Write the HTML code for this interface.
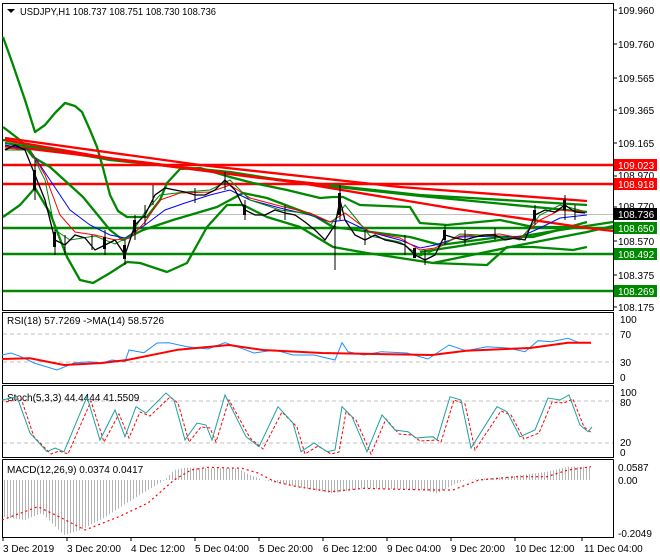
<!DOCTYPE html>
<html><head><meta charset="utf-8"><style>
html,body{margin:0;padding:0;background:#fff;}
svg{display:block;font-family:"Liberation Sans",sans-serif;font-size:10px;}
</style></head><body>
<svg width="660" height="560" viewBox="0 0 660 560" xmlns="http://www.w3.org/2000/svg">
<defs>
<pattern id="hist" width="3" height="10" patternUnits="userSpaceOnUse"><rect x="1" y="0" width="1" height="10" fill="#b4b4b4"/></pattern>
</defs>
<rect width="660" height="560" fill="#fff"/>
<g stroke="#000" stroke-width="1" fill="none">
<rect x="2.5" y="3.5" width="611" height="307"/>
<rect x="2.5" y="312.5" width="611" height="71"/>
<rect x="2.5" y="385.5" width="611" height="72"/>
<path d="M2.5 459.5H613.5M2.5 459.5V537.5H613.5V459.5"/>
</g>
<g stroke="#000">
<path d="M613 10h4M613 44h4M613 78h4M613 110h4M613 143h4M613 176h4M613 207h4M613 241h4M613 275h4M613 307h4"/>
<path d="M3 537v4M67 537v4M131 537v4M195 537v4M259 537v4M323 537v4M387 537v4M451 537v4M515 537v4M582 537v4"/>
</g>
<text x="20" y="15" font-size="10.5" fill="#000" textLength="196" lengthAdjust="spacingAndGlyphs">USDJPY,H1  108.737 108.751 108.730 108.736</text>
<path d="M7 9l4 4l4-4z" fill="#000"/>
<line x1="3" y1="214.5" x2="613" y2="214.5" stroke="#c0c0c0"/>
<g stroke-width="2.5" fill="none">
<line x1="3" y1="165" x2="613" y2="165" stroke="#f00"/>
<line x1="3" y1="184" x2="613" y2="184" stroke="#f00"/>
<line x1="3" y1="228" x2="613" y2="228" stroke="#080"/>
<line x1="3" y1="254" x2="613" y2="254" stroke="#080"/>
<line x1="3" y1="291" x2="613" y2="291" stroke="#080"/>
</g>
<g fill="none" stroke-width="2.3" stroke-linejoin="round">
<polyline stroke="#080" points="3,37 12,62 25,100 35,132 45,125 55,113 65,103 75,106 82,112 90,130 97,147 103,168 110,195 118,211 127,217 147,217 160,200 167,183 180,169 200,168 230,177 253,183 287,190 320,198 333,197 343,197 360,205 410,207 420,223 447,225 500,220 533,227 587,227"/>
<polyline stroke="#080" points="3,217 20,205 35,188 50,213 67,257 80,280 93,283 110,273 127,262 140,263 167,272 187,263 207,227 227,205 243,205 267,217 300,227 333,247 367,253 433,263 487,265 507,247 533,247 573,250 587,247"/>
<polyline stroke="#080" points="3,127 20,140 33,157 50,167 83,197 110,230 123,240 143,230 173,220 217,207 243,193 267,198 317,217 333,227 410,237 440,245 500,237 533,237 587,222"/>
<polyline stroke="#080" points="3,140 60,150 110,160 170,166 230,172 300,183 420,196 587,212"/>
<polyline stroke="#080" points="5,143 100,158 200,170 300,182 420,195 587,205"/>
<polyline stroke="#080" points="433,263 520,245 587,232 613,226"/>
<polyline stroke="#080" points="420,252 500,240 560,230 613,222"/>
<polyline stroke="#f00" points="5,138 200,165 400,187 587,201"/>
<polyline stroke="#f00" points="5,146 150,163 300,183 450,208 587,228 613,231"/>
<polyline stroke="#f00" points="5,140 120,160 260,178 330,185"/>
</g>
<g fill="none" stroke-width="1">
<polyline stroke="#00f" points="5,145 30,150 50,180 70,210 90,225 110,235 125,238 145,225 165,210 185,203 210,195 230,190 250,200 280,208 310,215 330,222 345,220 370,232 400,240 420,248 435,245 460,237 500,236 520,237 540,228 560,218 587,215"/>
<polyline stroke="#f00" points="5,148 30,150 45,175 60,215 75,232 95,235 115,240 130,238 145,222 160,200 180,193 210,192 230,185 250,198 280,206 310,213 330,222 345,213 370,232 400,238 420,250 435,248 460,236 500,234 520,238 540,220 560,210 587,212"/>
<polyline stroke="#080" points="5,150 30,150 45,180 55,230 70,240 95,236 115,244 130,236 145,212 160,195 185,192 210,190 230,180 250,200 280,210 310,214 330,226 345,205 370,236 400,242 420,256 435,250 460,234 500,236 520,240 540,215 560,205 587,212"/>
</g>
<polyline fill="none" stroke="#000" stroke-width="1.3" points="5,150 15,145 25,150 35,175 45,200 55,240 65,245 75,235 85,238 95,250 105,245 115,240 125,255 135,225 145,215 155,195 165,188 175,190 185,192 195,195 205,195 215,190 225,180 235,190 245,210 255,215 265,215 275,210 285,213 295,215 305,222 315,230 325,240 335,225 340,200 345,220 355,235 365,240 375,235 385,240 395,242 405,245 415,255 425,260 435,255 445,235 455,238 465,240 475,237 485,235 495,235 505,240 515,238 525,240 535,215 545,210 555,212 565,205 575,212 585,213"/>
<g stroke="#000" stroke-width="1">
<path d="M35 160v40M55 230v25M65 235v20M105 230v25M125 240v25M135 215v25M145 205v20M225 172v18M245 200v20M340 185v35M335 225v45M405 235v20M425 250v15M445 225v20M535 205v20M565 195v25M575 205v15M92 235v15M153 185v20M195 188v15M285 205v15M365 230v15M465 230v15M495 228v12"/>
</g>
<g fill="#000">
<rect x="33" y="170" width="3" height="20"/><rect x="53" y="232" width="3" height="15"/><rect x="103" y="237" width="3" height="12"/><rect x="123" y="245" width="3" height="14"/><rect x="133" y="220" width="3" height="12"/><rect x="243" y="205" width="3" height="10"/><rect x="338" y="193" width="3" height="22"/><rect x="413" y="248" width="3" height="10"/><rect x="443" y="230" width="3" height="10"/><rect x="533" y="210" width="3" height="10"/><rect x="563" y="200" width="3" height="10"/>
</g>
<g font-size="10" fill="#000">
<text x="618" y="14">109.960</text><text x="618" y="48">109.760</text><text x="618" y="82">109.565</text><text x="618" y="114">109.365</text><text x="618" y="147">109.165</text><text x="618" y="179">108.970</text><text x="618" y="210">108.770</text><text x="618" y="245">108.570</text><text x="618" y="279">108.375</text><text x="618" y="311">108.175</text>
</g>
<g font-size="10">
<rect x="614" y="159" width="43" height="12" fill="#f00"/><text x="618" y="169" fill="#fff">109.023</text>
<rect x="614" y="178" width="43" height="12" fill="#f00"/><text x="618" y="188" fill="#fff">108.918</text>
<rect x="614" y="208" width="43" height="12" fill="#000"/><text x="618" y="218" fill="#fff">108.736</text>
<rect x="614" y="222" width="43" height="12" fill="#080"/><text x="618" y="232" fill="#fff">108.650</text>
<rect x="614" y="248" width="43" height="12" fill="#080"/><text x="618" y="258" fill="#fff">108.492</text>
<rect x="614" y="285" width="43" height="12" fill="#080"/><text x="618" y="295" fill="#fff">108.269</text>
</g>
<g stroke="#c0c0c0" stroke-dasharray="4,3"><line x1="3" y1="334" x2="613" y2="334"/><line x1="3" y1="362" x2="613" y2="362"/></g>
<text x="7" y="324" fill="#000">RSI(18) 57.7269  -&gt;MA(14) 58.5726</text>
<polyline fill="none" stroke="#1e90ff" stroke-width="1" points="2,355 11,353 21,356.7 34,363 57,370 74,363 89,361.7 102,363 112,360 125,361.7 129,350 144,352.7 157,343 169,342.7 187,346.7 208,349 225,342.7 237,346.7 254,353 275,350 293,355 314,355 335,360 342,342.7 348,351.7 364,355 381,351.7 407,353 428,359 449,345 466,350.7 487,346.7 508,348 525,351.7 538,340.7 551,341.7 568,338.3 580,343 591,343"/>
<polyline fill="none" stroke="#f00" stroke-width="2" points="2,359 30,358.3 64,365 102,363 127,360 178,349.7 229,345 263,350 322,353 432,355 466,350.7 530,348 568,342.7 591,342.7"/>
<g fill="#000"><text x="620" y="323">100</text><text x="620" y="338">70</text><text x="620" y="366">30</text><text x="620" y="381">0</text></g>
<g stroke="#c0c0c0" stroke-dasharray="4,3"><line x1="3" y1="401" x2="613" y2="401"/><line x1="3" y1="443" x2="613" y2="443"/></g>
<text x="7" y="401" fill="#000">Stoch(5,3,3) 44.4444 41.5509</text>
<polyline fill="none" stroke="#f00" stroke-width="1" stroke-dasharray="3,2" points="6,402 21,398 34,437 51,454 59,451 68,454 91,401 104,442 119,414 129,438 140,412 150,416 170,397 178,403 189,442 201,427 210,428 216,442 229,400 250,438 263,449 282,412 297,427 305,454 318,446 331,454 339,452 346,412 356,420 371,454 386,419 399,434 412,435 420,441 437,440 441,442 454,400 465,404 475,450 501,411 511,415 524,439 539,433 552,402 564,403 573,399 584,427 592,433"/>
<polyline fill="none" stroke="#20a0a0" stroke-width="1" points="2,400 17,396.7 30,433 47,451.7 55,448 64,451.7 87,396.7 100,440 115,410 125,436.7 136,406.7 146,413 166,393 174,400 185,440 197,423 206,425 212,440 225,395 246,436.7 259,446.7 278,406.7 293,423 301,451.7 314,443 327,451.7 335,450 342,406.7 352,416.7 367,451.7 382,415 395,430 408,431.7 416,438 433,436.7 437,440 450,396.7 461,400 471,448 497,406.7 507,411.7 520,436.7 535,430 548,398 560,400 569,395 580,425 588,431.7 592,427"/>
<g fill="#000"><text x="620" y="396">100</text><text x="620" y="406">80</text><text x="620" y="446">20</text><text x="620" y="456">0</text></g>
<polygon fill="url(#hist)" points="3,480 3,516.7 25,520 42,513 64,535 81,530 106,516.7 127,503 148,490 165,480 174,470 186,467.7 212,468.3 237,468.3 250,475 263,480 297,486.7 331,493.3 364,488.3 424,490 437,493.3 453,485 466,480 508,476.7 547,471.7 568,466.7 591,466.7 591,480"/>
<polyline fill="none" stroke="#f00" stroke-width="1.2" stroke-dasharray="2,3" points="2,520 38,506.7 59,516.7 85,530 119,516.7 148,503 174,480 191,470 208,467.3 242,468.3 258,473 275,481.7 297,486.7 331,491.7 364,488.3 398,489.3 436,490 453,490 479,480 517,476.7 547,476.7 568,470 591,466.7"/>
<text x="7" y="473" fill="#000">MACD(12,26,9) 0.0374 0.0417</text>
<g fill="#000"><text x="618" y="471">0.0587</text><text x="618" y="484">0.00</text><text x="618" y="537">-0.2049</text></g>
<g fill="#000" font-size="10">
<text x="3" y="552">3 Dec 2019</text><text x="67" y="552">3 Dec 20:00</text><text x="131" y="552">4 Dec 12:00</text><text x="195" y="552">5 Dec 04:00</text><text x="259" y="552">5 Dec 20:00</text><text x="323" y="552">6 Dec 12:00</text><text x="387" y="552">9 Dec 04:00</text><text x="451" y="552">9 Dec 20:00</text><text x="515" y="552">10 Dec 12:00</text><text x="584" y="552">11 Dec 04:00</text>
</g>
</svg>
</body></html>
